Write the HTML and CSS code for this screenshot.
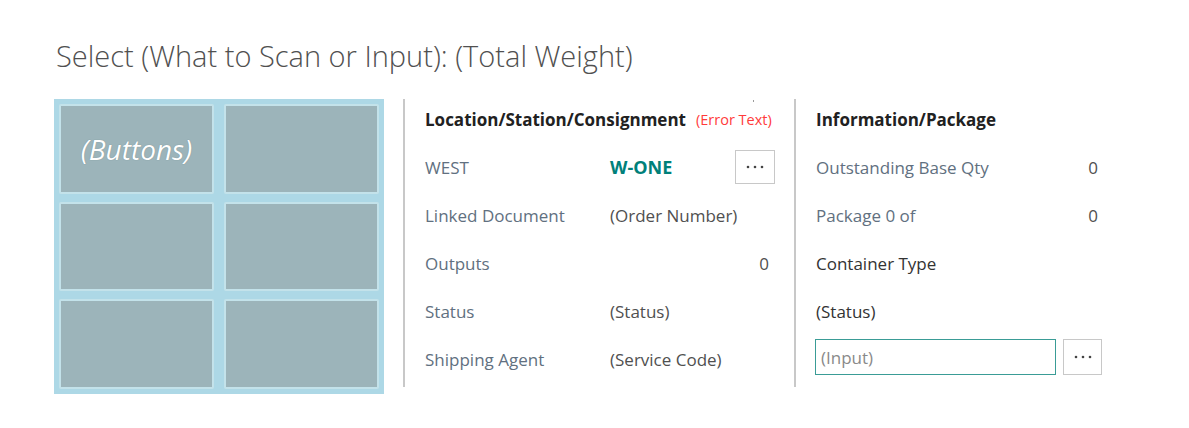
FILE: index.html
```html
<!DOCTYPE html>
<html lang="en">
<head>
    <meta charset="UTF-8">
    <meta name="viewport" content="width=device-width, initial-scale=1.0">
    <title>Select (What to Scan or Input)</title>
    <link rel="stylesheet" href="styles.css">
</head>
<body>

    <h1 class="page-title">Select (What to Scan or Input): (Total Weight)</h1>

    <div class="main">
        <!-- Button pad -->
        <div class="button-grid">
            <div class="pad-button">(Buttons)</div>
            <div class="pad-button"></div>
            <div class="pad-button"></div>
            <div class="pad-button"></div>
            <div class="pad-button"></div>
            <div class="pad-button"></div>
        </div>

        <!-- Location / Station / Consignment -->
        <div class="group group-location">
            <span class="tick"></span>
            <div class="group-header">
                <span class="group-title">Location/Station/Consignment</span>
                <span class="error-text">(Error Text)</span>
            </div>
            <div class="field">
                <span class="field-label">WEST</span>
                <span class="field-value code">W-ONE</span>
                <button class="lookup" title="Select">
                    <svg width="20" height="4" viewBox="0 0 20 4"><circle cx="3" cy="2" r="1.3"/><circle cx="10" cy="2" r="1.3"/><circle cx="17" cy="2" r="1.3"/></svg>
                </button>
            </div>
            <div class="field">
                <span class="field-label">Linked Document</span>
                <span class="field-value">(Order Number)</span>
            </div>
            <div class="field">
                <span class="field-label">Outputs</span>
                <span class="field-value number">0</span>
            </div>
            <div class="field">
                <span class="field-label">Status</span>
                <span class="field-value">(Status)</span>
            </div>
            <div class="field">
                <span class="field-label">Shipping Agent</span>
                <span class="field-value">(Service Code)</span>
            </div>
        </div>

        <!-- Information / Package -->
        <div class="group group-info">
            <div class="group-header">
                <span class="group-title">Information/Package</span>
            </div>
            <div class="field">
                <span class="field-label">Outstanding Base Qty</span>
                <span class="field-value number">0</span>
            </div>
            <div class="field">
                <span class="field-label">Package 0 of</span>
                <span class="field-value number">0</span>
            </div>
            <div class="field">
                <span class="field-text">Container Type</span>
            </div>
            <div class="field">
                <span class="field-text">(Status)</span>
            </div>
            <div class="field field-input">
                <input type="text" class="scan-input" placeholder="(Input)">
                <button class="lookup lookup-input" title="Select">
                    <svg width="20" height="4" viewBox="0 0 20 4"><circle cx="3" cy="2" r="1.3"/><circle cx="10" cy="2" r="1.3"/><circle cx="17" cy="2" r="1.3"/></svg>
                </button>
            </div>
        </div>
    </div>

</body>
</html>
```

FILE: styles.css
```css
/* Page */
body {
    font-family: "Open Sans", "Noto Sans", sans-serif;
    margin: 0;
    background: #ffffff;
    color: #505050;
}

.page-title {
    font-weight: 300;
    font-size: 29px;
    color: #505050;
    margin: 0;
    padding: 36px 0 0 56px;
    line-height: 40px;
}

.main {
    display: flex;
    align-items: flex-start;
    padding-left: 54px;
    margin-top: 23px;
}

/* Button pad */
.button-grid {
    width: 330px;
    height: 295px;
    box-sizing: border-box;
    background: #add8e6;
    padding: 5px;
    display: grid;
    grid-template-columns: 1fr 1fr;
    grid-template-rows: 1fr 1fr 1fr;
    column-gap: 10px;
    row-gap: 8px;
}

.pad-button {
    background: #9cb4ba;
    border: 2px solid #c3e2ea;
    border-radius: 2px;
    color: #ffffff;
    font-style: italic;
    font-size: 28px;
    display: flex;
    align-items: center;
    justify-content: center;
    text-shadow: 0 0 1px #6a8086;
}

/* Field groups */
.group {
    position: relative;
    border-left: 2px solid #c8c8c8;
    height: 288px;
    box-sizing: border-box;
    font-size: 17px;
}

.group-location {
    margin-left: 19px;
    width: 391px;
    padding: 0 19px 0 20px;
}

.group-info {
    width: 310px;
    padding: 0 0 0 20px;
}

.tick {
    position: absolute;
    top: 1px;
    left: 348px;
    width: 1px;
    height: 2px;
    background: #9a9a9a;
}

.group-header {
    height: 44px;
    padding-bottom: 3px;
    box-sizing: border-box;
    display: flex;
    align-items: center;
    white-space: nowrap;
}

.group-title {
    font-weight: 700;
    color: #212121;
}

.error-text {
    color: #ff3b3b;
    font-size: 14.5px;
    margin-left: 10px;
}

.field {
    height: 48px;
    display: flex;
    align-items: center;
}

.field-label {
    width: 185px;
    color: #617080;
}

.group-info .field-label {
    width: auto;
    flex: 1;
}

.field-value {
    flex: 1;
    color: #505050;
}

.field-value.number {
    text-align: right;
    padding-right: 6px;
}

.group-info .field-value.number {
    flex: 0 0 auto;
    padding-right: 6px;
}

.field-value.code {
    color: #00807a;
    font-weight: 700;
    font-size: 18px;
}

.field-text {
    color: #333333;
}

/* Lookup buttons and input */
.lookup {
    width: 40px;
    height: 34px;
    border: 1px solid #c8c8c8;
    background: #ffffff;
    padding: 0;
    display: flex;
    align-items: center;
    justify-content: center;
}

.lookup svg {
    fill: #444444;
}

.field-input {
    padding-bottom: 4px;
    box-sizing: border-box;
}

.lookup-input {
    width: 39px;
    height: 36px;
    margin-left: 7px;
}

.scan-input {
    width: 241px;
    height: 36px;
    box-sizing: border-box;
    border: 1px solid #3a9c96;
    padding: 0 5px;
    font-size: 17px;
    font-family: inherit;
    color: #505050;
    margin-left: -1px;
}

.scan-input::placeholder {
    color: #8a8a8a;
}
```
